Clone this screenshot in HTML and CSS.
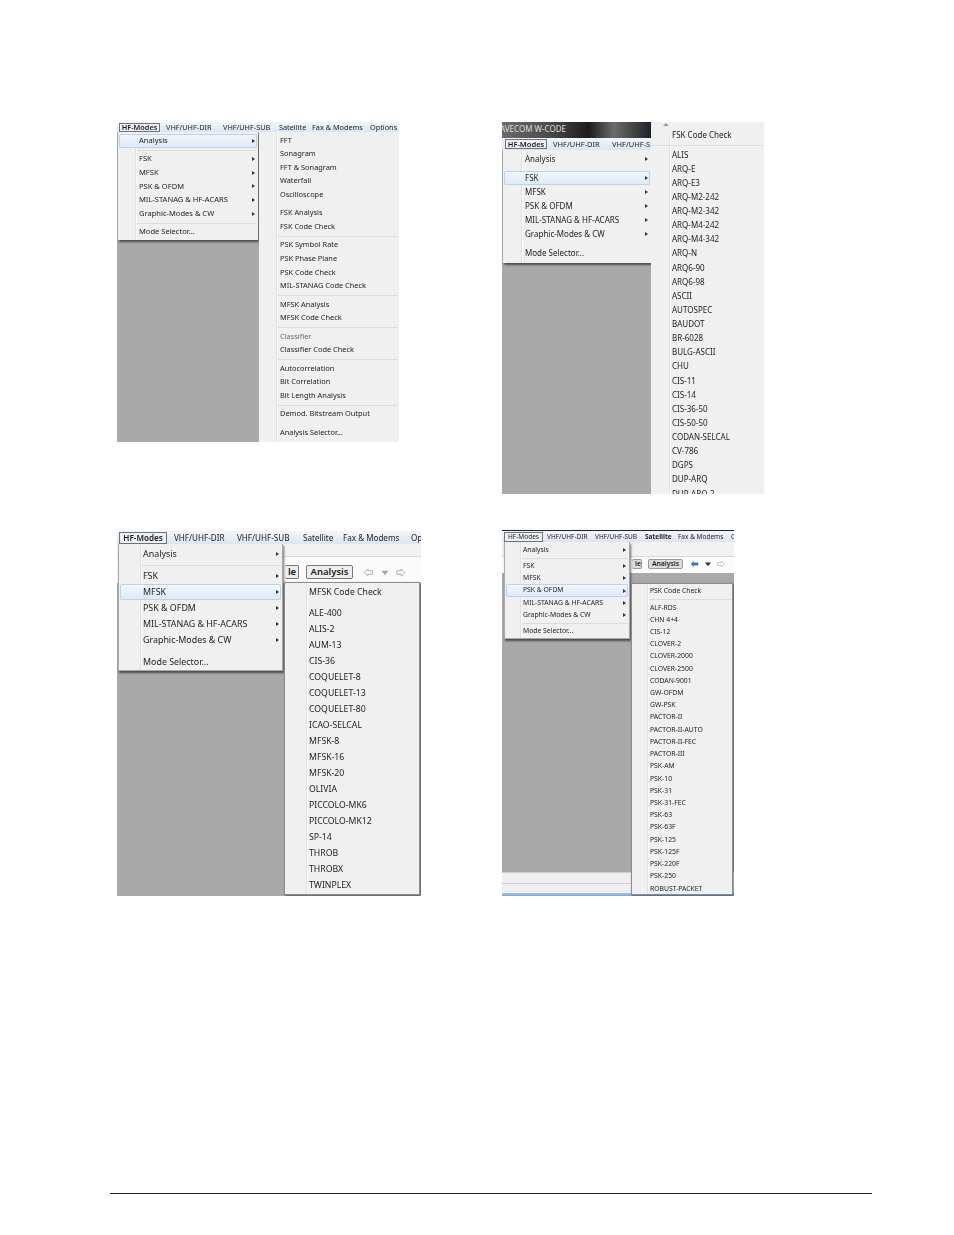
FILE: index.html
```html
<!DOCTYPE html>
<html lang="en">
<head>
<meta charset="utf-8">
<title>HF-Modes menus</title>
<link rel="stylesheet" href="styles.css">
</head>
<body>
<div class="page">
  <div class="shots shots-top">
    <section class="shot s1">
      <nav class="bar"><b class="cur">HF-Modes</b><span>VHF/UHF-DIR</span><span>VHF/UHF-SUB</span><span>Satellite</span><span>Fax &amp; Modems</span><span>Options</span></nav>
      <div class="stage">
        <div class="menu left">
          <div class="it sub hot">Analysis</div><div class="sep"></div>
          <div class="it sub">FSK</div><div class="it sub">MFSK</div><div class="it sub">PSK &amp; OFDM</div><div class="it sub">MIL-STANAG &amp; HF-ACARS</div><div class="it sub">Graphic-Modes &amp; CW</div><div class="sep"></div>
          <div class="it">Mode Selector...</div>
        </div>
        <div class="menu right">
          <div class="it">FFT</div><div class="it">Sonagram</div><div class="it">FFT &amp; Sonagram</div><div class="it">Waterfall</div><div class="it">Oscilloscope</div><div class="gap"></div>
          <div class="it">FSK Analysis</div><div class="it">FSK Code Check</div><div class="sep"></div>
          <div class="it">PSK Symbol Rate</div><div class="it">PSK Phase Plane</div><div class="it">PSK Code Check</div><div class="it">MIL-STANAG Code Check</div><div class="sep"></div>
          <div class="it">MFSK Analysis</div><div class="it">MFSK Code Check</div><div class="sep"></div>
          <div class="it dim">Classifier</div><div class="it">Classifier Code Check</div><div class="sep"></div>
          <div class="it">Autocorrelation</div><div class="it">Bit Correlation</div><div class="it">Bit Length Analysis</div><div class="sep"></div>
          <div class="it">Demod. Bitstream Output</div><div class="gap"></div>
          <div class="it">Analysis Selector...</div>
        </div>
      </div>
    </section>
    <section class="shot s2">
      <div class="title">AVECOM W-CODE</div>
      <nav class="bar"><b class="cur">HF-Modes</b><span>VHF/UHF-DIR</span><span>VHF/UHF-SUB</span></nav>
      <div class="stage">
        <div class="menu left">
          <div class="it sub">Analysis</div><div class="gap"></div>
          <div class="it sub hot">FSK</div><div class="it sub">MFSK</div><div class="it sub">PSK &amp; OFDM</div><div class="it sub">MIL-STANAG &amp; HF-ACARS</div><div class="it sub">Graphic-Modes &amp; CW</div><div class="gap"></div>
          <div class="it">Mode Selector...</div>
        </div>
      </div>
      <div class="menu right">
        <div class="scroll-up"></div>
        <div class="it">FSK Code Check</div><div class="sep"></div>
        <div class="it">ALIS</div><div class="it">ARQ-E</div><div class="it">ARQ-E3</div><div class="it">ARQ-M2-242</div><div class="it">ARQ-M2-342</div><div class="it">ARQ-M4-242</div><div class="it">ARQ-M4-342</div><div class="it">ARQ-N</div><div class="it">ARQ6-90</div><div class="it">ARQ6-98</div><div class="it">ASCII</div><div class="it">AUTOSPEC</div><div class="it">BAUDOT</div><div class="it">BR-6028</div><div class="it">BULG-ASCII</div><div class="it">CHU</div><div class="it">CIS-11</div><div class="it">CIS-14</div><div class="it">CIS-36-50</div><div class="it">CIS-50-50</div><div class="it">CODAN-SELCAL</div><div class="it">CV-786</div><div class="it">DGPS</div><div class="it">DUP-ARQ</div><div class="it">DUP-ARQ-2</div>
      </div>
    </section>
  </div>
  <div class="shots shots-bottom">
    <section class="shot s3">
      <nav class="bar"><b class="cur">HF-Modes</b><span>VHF/UHF-DIR</span><span>VHF/UHF-SUB</span><span>Satellite</span><span>Fax &amp; Modems</span><span>Options</span></nav>
      <div class="tabs"></div>
      <div class="tools"><span class="btn stub">le</span><span class="btn">Analysis</span>
        <svg class="arrows" viewBox="0 0 48 10"><path d="M1 5l4-4v2h5v4H5v2z M42 1l4 4-4 4V7h-5V3h5z" fill="none" stroke="#a8a8a8"/><path d="M20 3h8l-4 5z" fill="#a8a8a8"/></svg>
      </div>
      <div class="stage"></div>
      <div class="menu left">
        <div class="it sub">Analysis</div><div class="sep"></div>
        <div class="it sub">FSK</div><div class="it sub hot">MFSK</div><div class="it sub">PSK &amp; OFDM</div><div class="it sub">MIL-STANAG &amp; HF-ACARS</div><div class="it sub">Graphic-Modes &amp; CW</div><div class="gap"></div>
        <div class="it">Mode Selector...</div>
      </div>
      <div class="menu right">
        <div class="it">MFSK Code Check</div><div class="gap"></div>
        <div class="it">ALE-400</div><div class="it">ALIS-2</div><div class="it">AUM-13</div><div class="it">CIS-36</div><div class="it">COQUELET-8</div><div class="it">COQUELET-13</div><div class="it">COQUELET-80</div><div class="it">ICAO-SELCAL</div><div class="it">MFSK-8</div><div class="it">MFSK-16</div><div class="it">MFSK-20</div><div class="it">OLIVIA</div><div class="it">PICCOLO-MK6</div><div class="it">PICCOLO-MK12</div><div class="it">SP-14</div><div class="it">THROB</div><div class="it">THROBX</div><div class="it">TWINPLEX</div>
      </div>
    </section>
    <section class="shot s4">
      <nav class="bar"><b class="cur">HF-Modes</b><span>VHF/UHF-DIR</span><span>VHF/UHF-SUB</span><span class="strong">Satellite</span><span>Fax &amp; Modems</span><span>Options</span></nav>
      <div class="tabs"></div>
      <div class="tools"><span class="btn stub">le</span><span class="btn">Analysis</span>
        <svg class="arrows" viewBox="0 0 48 10"><path d="M1 5l4-4v2h6v4H5v2z" fill="#3f78c0"/><path d="M20 3h8l-4 5z" fill="#333"/><path d="M42 1l4 4-4 4V7h-5V3h5z" fill="none" stroke="#b4b4b4"/></svg>
      </div>
      <div class="stage"></div>
      <div class="status"></div>
      <div class="status"></div>
      <div class="taskbar"></div>
      <div class="menu left">
        <div class="it sub">Analysis</div><div class="sep"></div>
        <div class="it sub">FSK</div><div class="it sub">MFSK</div><div class="it sub hot">PSK &amp; OFDM</div><div class="it sub">MIL-STANAG &amp; HF-ACARS</div><div class="it sub">Graphic-Modes &amp; CW</div><div class="sep"></div>
        <div class="it">Mode Selector...</div>
      </div>
      <div class="menu right">
        <div class="it">PSK Code Check</div><div class="sep"></div>
        <div class="it">ALF-RDS</div><div class="it">CHN 4+4</div><div class="it">CIS-12</div><div class="it">CLOVER-2</div><div class="it">CLOVER-2000</div><div class="it">CLOVER-2500</div><div class="it">CODAN-9001</div><div class="it">GW-OFDM</div><div class="it">GW-PSK</div><div class="it">PACTOR-II</div><div class="it">PACTOR-II-AUTO</div><div class="it">PACTOR-II-FEC</div><div class="it">PACTOR-III</div><div class="it">PSK-AM</div><div class="it">PSK-10</div><div class="it">PSK-31</div><div class="it">PSK-31-FEC</div><div class="it">PSK-63</div><div class="it">PSK-63F</div><div class="it">PSK-125</div><div class="it">PSK-125F</div><div class="it">PSK-220F</div><div class="it">PSK-250</div><div class="it">ROBUST-PACKET</div>
      </div>
    </section>
  </div>
  <div class="rule"></div>
</div>
</body>
</html>
```
FILE: styles.css
```css
html, body { margin: 0; background: #fff; }
.page { width: 954px; height: 1235px; position: relative; overflow: hidden; font-family: "Noto Sans", "Open Sans", sans-serif; color: #1c1c1c; }
.shots { display: flex; align-items: flex-start; padding-left: 117px; }
.shots-top { padding-top: 122px; }
.shots-bottom { padding-top: 36px; }

.shot { position: relative; overflow: hidden; display: flex; flex-direction: column; flex: none; background: #a9a9a9; font-size: var(--fs); }
.s1 { --fs: 7.55px; --row: 13.6px; --gapH: 4.85px; --pad: 21px; --icon: 17px; width: 282px; height: 320px; }
.s2 { --fs: 8px; --row: 14.13px; --gapH: 4.7px; --pad: 22px; --icon: 18px; width: 262px; height: 372px; margin-left: 103px; }
.s3 { --fs: 8.9px; --row: 16px; --gapH: 5.8px; --pad: 24px; --icon: 21px; width: 304px; height: 365px; margin-top: 1px; }
.s4 { --fs: 6.8px; --row: 12.22px; --gapH: 4.3px; --pad: 18px; --icon: 15px; width: 232px; height: 366px; margin-left: 81px; }

.title { height: 16px; line-height: 13px; width: 149px; text-indent: -2px; color: #ddd; white-space: nowrap; overflow: hidden; background: linear-gradient(90deg, #6a6a6a 0, #4d4d4d 30%, #1c1c1c 58%, #6c6c6c 75%, #1e2228 100%); }

.bar { display: flex; flex: none; align-items: center; white-space: nowrap; overflow: hidden; background: linear-gradient(#f2f5fb, #dde5f2); filter: blur(.2px); }
.bar span, .bar b { flex: none; }
.bar b { font-weight: 600; }
.bar .strong { font-weight: 700; }
.cur { border: 1px solid #6a7480; background: #eef0f3; text-align: center; box-sizing: border-box; }
.s1 .bar { height: 10px; padding-left: 2px; font-size: 7.3px; }
.s1 .cur { width: 41px; height: 9px; line-height: 7px; margin-right: 6px; }
.s1 .bar span:nth-of-type(1) { width: 57px; }
.s1 .bar span:nth-of-type(2) { width: 56px; }
.s1 .bar span:nth-of-type(3) { width: 33px; }
.s1 .bar span:nth-of-type(4) { width: 58px; }
.s2 .bar { height: 12px; width: 149px; padding-left: 3px; font-size: 7.5px; }
.s2 .cur { width: 42px; height: 10px; line-height: 8px; margin-right: 6px; }
.s2 .bar span:nth-of-type(1) { width: 59px; }
.s3 .bar { height: 13px; padding-left: 2px; font-size: 8.1px; }
.s3 .cur { width: 48px; height: 12px; line-height: 10px; margin-right: 7px; }
.s3 .bar span:nth-of-type(1) { width: 63px; }
.s3 .bar span:nth-of-type(2) { width: 66px; }
.s3 .bar span:nth-of-type(3) { width: 40px; }
.s3 .bar span:nth-of-type(4) { width: 68px; }
.s4 .bar { height: 12px; padding-left: 2px; border-top: 1px solid #222; box-sizing: border-box; font-size: 6.5px; }
.s4 .bar b.cur { width: 39px; height: 10px; line-height: 8px; margin-right: 4px; font-weight: 400; }
.s4 .bar span:nth-of-type(1) { width: 48px; }
.s4 .bar span:nth-of-type(2) { width: 50px; }
.s4 .bar span:nth-of-type(3) { width: 33px; }
.s4 .bar span:nth-of-type(4) { width: 53px; }

.stage { flex: 1; min-height: 0; background: #a9a9a9; }
.tabs { flex: none; background: #f2f2f2; border-bottom: 1px solid #d8d8d8; }
.tools { flex: none; display: flex; align-items: center; background: #fbfbfb; white-space: nowrap; box-sizing: border-box; }
.btn { border: 1px solid #777; border-radius: 2px; background: #eee; font-weight: 600; text-align: center; box-sizing: border-box; flex: none; }
.s3 .tabs { height: 12px; }
.s3 .tools { height: 26px; padding: 4px 0 0 168px; }
.s3 .btn { width: 47px; height: 14px; line-height: 12px; margin-right: 9px; font-size: 9.5px; }
.s3 .stub { width: 14px; margin-right: 7px; text-indent: 1px; border-left: 0; }
.s3 .arrows { width: 46px; height: 9px; }
.s4 .tabs { height: 14px; }
.s4 .tools { height: 16px; padding: 0 0 2px 130px; }
.s4 .btn { width: 35px; height: 10px; line-height: 8px; margin-right: 7px; font-size: 6.8px; background: #ddd; border-color: #999; }
.s4 .stub { width: 10px; margin-right: 6px; text-align: right; border-left: 0; }
.s4 .arrows { width: 36px; height: 8px; }
.status { flex: none; height: 10.5px; background: #efefef; border-top: 1px solid #ccc; box-sizing: border-box; }
.taskbar { flex: none; height: 3px; background: linear-gradient(#a9c4e4, #7fa8d8); }

.menu { position: absolute; box-sizing: border-box; background: #f0f0f0; white-space: nowrap; overflow: hidden; }
.menu::before { content: ""; position: absolute; top: 0; bottom: 0; left: var(--icon); width: 1px; background: #e0e0e0; border-right: 1px solid #fafafa; }
.left { box-shadow: 1px 2px 2px rgba(0, 0, 0, .55); }
.s1 .left { left: 1px; top: 10px; width: 140px; height: 108px; padding-top: 2px; }
.s1 .right { left: 142px; top: 10px; width: 140px; height: 310px; padding-top: 1.5px; font-size: 7.4px; }
.s2 .left { left: 1px; top: 0; width: 148px; height: 113px; padding-top: 2px; }
.s2 .stage { position: relative; width: 149px; }
.s2 .right { left: 149px; top: 0; width: 113px; height: 372px; padding-top: 6px; --gapH: 5.4px; --pad: 21px; }
.s2 .right::before { top: 16px; }
.s3 .left { left: 1px; top: 13px; width: 165px; height: 127px; padding-top: 2px; }
.s3 .right { left: 167px; top: 51px; width: 136px; height: 313px; padding-top: .5px; border: 1px solid #8c8c8c; box-shadow: 1px 1px 2px rgba(0, 0, 0, .5); font-size: 8.7px; }
.s4 .left { left: 2px; top: 12px; width: 126px; height: 97px; padding-top: 1.5px; }
.s4 .right { left: 129px; top: 53px; width: 102px; height: 312px; padding-top: 1px; border: 1px solid #8c8c8c; box-shadow: 1px 1px 2px rgba(0, 0, 0, .5); }
.s3 .left, .s4 .left { border: 1px solid #a8a8a8; border-top: 0; }

.it { position: relative; height: var(--row); line-height: var(--row); padding-left: var(--pad); filter: blur(.25px); }
.dim { color: #6a6a6a; }
.sub::after { content: ""; position: absolute; right: 3px; top: 50%; margin-top: -2px; border-left: 3px solid #333; border-top: 2px solid transparent; border-bottom: 2px solid transparent; }
.hot { background: linear-gradient(#f2f7fd, #dde9f7); box-shadow: inset 0 0 0 1px #bdd2ea; border-radius: 2px; margin: 0 1px; padding-left: calc(var(--pad) - 1px); }
.hot::after { right: 2px; }
.sep, .gap { position: relative; height: var(--gapH); }
.sep::after { content: ""; position: absolute; left: calc(var(--icon) + 2px); right: 1px; top: 50%; height: 1px; background: #dcdcdc; }
.s2 .right .sep::after { left: 0; right: 0; }
.scroll-up { position: absolute; left: 12px; top: 1px; border-bottom: 3px solid #999; border-left: 3px solid transparent; border-right: 3px solid transparent; }

.rule { position: absolute; left: 110px; top: 1193px; width: 762px; height: 1px; background: #222; }
```
